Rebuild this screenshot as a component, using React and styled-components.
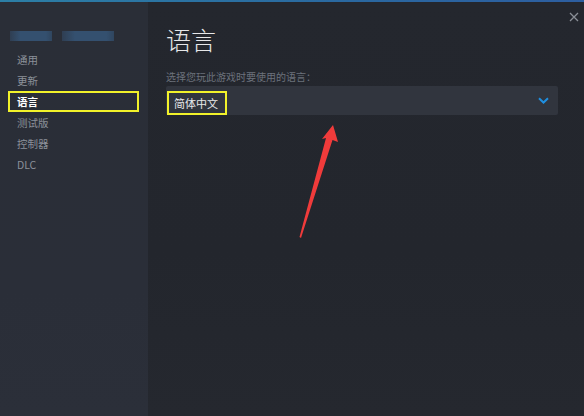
import React from "react";
import styled, { createGlobalStyle } from "styled-components";

const Global = createGlobalStyle`
  html, body {
    margin: 0;
    padding: 0;
    background: #24272e;
    font-family: "Noto Sans CJK SC", "Noto Sans", Arial, sans-serif;
  }
`;

const Window = styled.div`
  position: relative;
  width: 584px;
  height: 416px;
  display: flex;
  flex-direction: column;
  overflow: hidden;
`;

const TopLine = styled.div`
  height: 2px;
  background: linear-gradient(90deg, #2c7fa6, #2a68a0 60%, #2d5ea0);
`;

const Body = styled.div`
  flex: 1;
  display: flex;
`;

const Sidebar = styled.div`
  width: 148px;
  background: linear-gradient(180deg, #2a2e37, #2a2e38 70%, #2b2f39);
  padding-top: 29px;
  box-sizing: border-box;
`;

const Account = styled.div`
  display: flex;
  gap: 10px;
  padding-left: 10px;
  height: 10px;
  margin-bottom: 8px;
`;

const Blur = styled.div`
  width: ${(p) => p.w}px;
  height: 10px;
  background: linear-gradient(90deg, #2f3e52, #34506f 25%, #34506f 85%, #30465f);
  filter: blur(0.6px);
`;

const Nav = styled.div`
  display: flex;
  flex-direction: column;
  padding-left: 8px;
`;

const NavItem = styled.div`
  width: 131px;
  height: 21px;
  box-sizing: border-box;
  border: 2px solid ${(p) => (p.active ? "#f2f22a" : "transparent")};
  padding-left: 7px;
  font-size: 10.5px;
  line-height: 17px;
  color: ${(p) => (p.active ? "#ffffff" : "#8b9099")};
  font-weight: ${(p) => (p.active ? 700 : 400)};
`;

const Main = styled.div`
  flex: 1;
  padding: 20px 26px 0 18px;
  background: linear-gradient(180deg, #24272e, #23262d 60%, #25282f);
`;

const Title = styled.div`
  font-size: 25px;
  line-height: 34px;
  color: #e6e7e9;
  font-weight: 300;
`;

const Label = styled.div`
  margin-top: 14px;
  font-size: 10px;
  line-height: 14px;
  color: #6c727c;
`;

const Select = styled.div`
  margin-top: 2px;
  height: 29px;
  background: #31353e;
  border-radius: 2px;
  display: flex;
  align-items: center;
  justify-content: space-between;
  padding: 0 9px 0 1px;
`;

const Value = styled.span`
  border: 2px solid #f2f22a;
  height: 24px;
  box-sizing: border-box;
  width: 60px;
  padding-left: 5px;
  font-size: 11px;
  line-height: 20px;
  color: #e8e9eb;
  margin-top: 4px;
`;

const Close = styled.div`
  position: absolute;
  top: 3px;
  right: 5px;
  width: 10px;
  height: 10px;
`;

const Arrow = styled.svg`
  position: absolute;
  left: 0;
  top: 0;
  pointer-events: none;
`;

const items = ["通用", "更新", "语言", "测试版", "控制器", "DLC"];

export default function App() {
  return (
    <Window>
      <Global />
      <TopLine />
      <Body>
        <Sidebar>
          <Account>
            <Blur w={42} />
            <Blur w={52} />
          </Account>
          <Nav>
            {items.map((t) => (
              <NavItem key={t} active={t === "语言"}>
                {t}
              </NavItem>
            ))}
          </Nav>
        </Sidebar>
        <Main>
          <Title>语言</Title>
          <Label>选择您玩此游戏时要使用的语言：</Label>
          <Select>
            <Value>简体中文</Value>
            <svg width="11" height="7" viewBox="0 0 11 7">
              <path d="M1 1.2 L5.5 5.5 L10 1.2" fill="none" stroke="#1f8fe0" strokeWidth="2" />
            </svg>
          </Select>
        </Main>
      </Body>
      <Close>
        <svg width="10" height="10" viewBox="0 0 10 10">
          <path d="M1 1 L9 9 M9 1 L1 9" stroke="#8a8f97" strokeWidth="1.3" />
        </svg>
      </Close>
      <Arrow width="584" height="416" viewBox="0 0 584 416">
        <path
          d="M333 125 L338 142 L332.5 140 L301 238 L299.5 237 L326 138 L322 139 Z"
          fill="#f03b3b"
        />
      </Arrow>
    </Window>
  );
}
